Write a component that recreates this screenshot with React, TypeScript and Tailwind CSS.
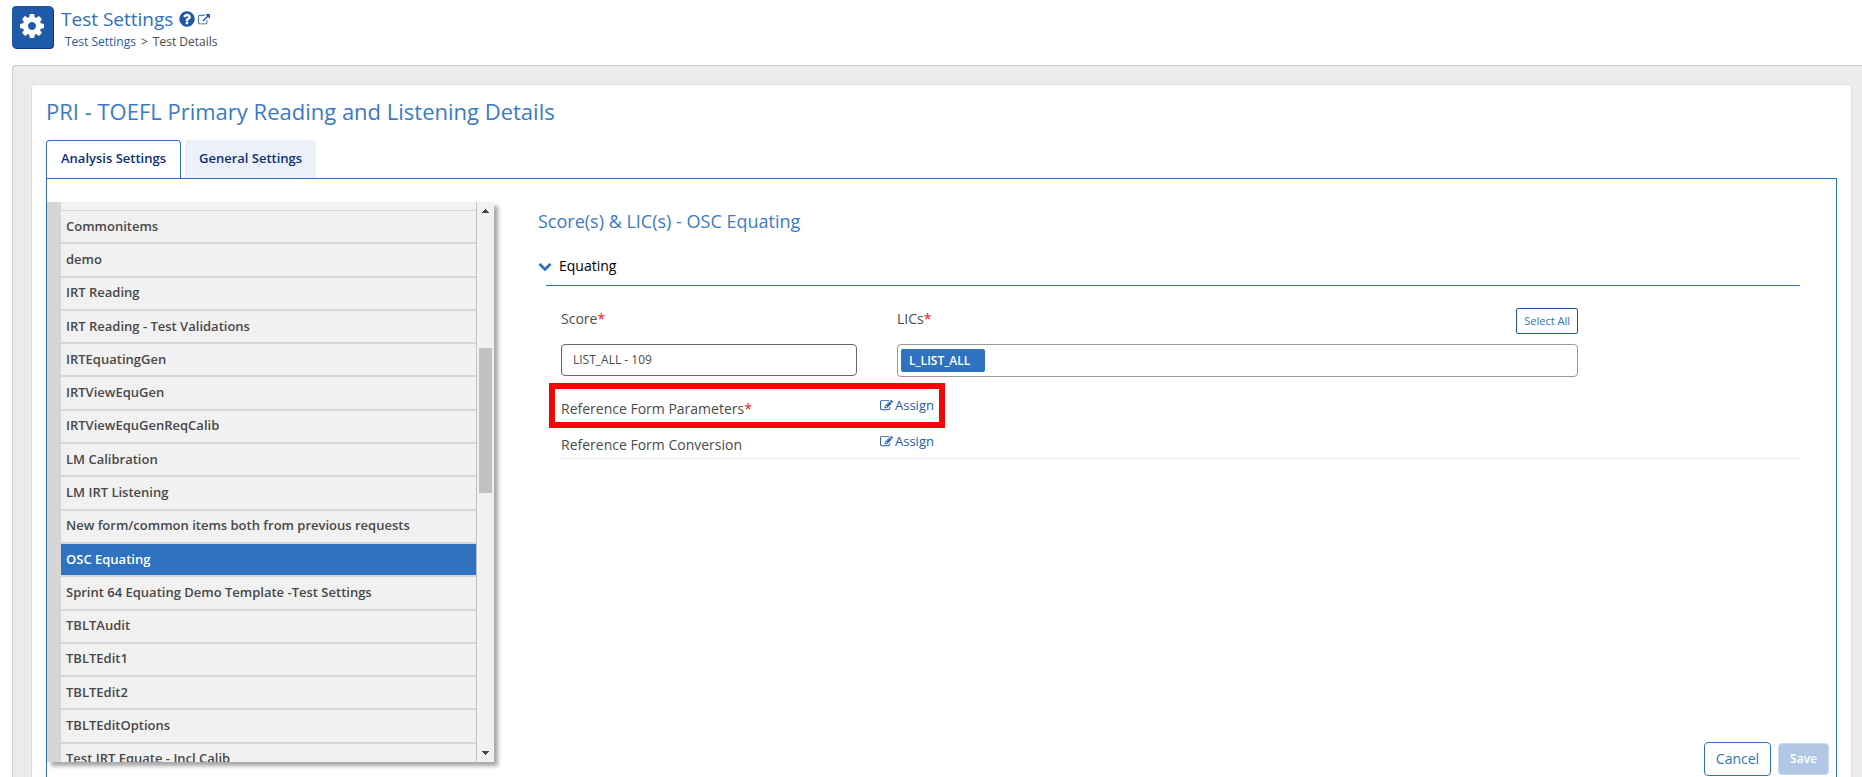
import React, { useState } from "react";

const ICONS = {
  cog: "M1152 896q0-106-75-181t-181-75-181 75-75 181 75 181 181 75 181-75 75-181zm512-109v222q0 12-8 23t-20 13l-185 28q-19 54-39 91 35 50 107 138 10 12 10 25t-9 23q-27 37-99 108t-94 71q-12 0-26-9l-138-108q-44 23-91 38-16 136-29 186-7 28-36 28h-222q-14 0-24.5-8.5t-11.5-21.5l-28-184q-49-16-90-37l-141 107q-10 9-25 9-14 0-25-11-126-114-165-168-7-10-7-23 0-12 8-23 15-21 51-66.5t54-70.5q-27-50-41-99l-183-27q-13-2-21-12.5t-8-23.5v-222q0-12 8-23t19-13l186-28q14-46 39-92-40-57-107-138-10-12-10-24 0-10 9-23 26-36 98.5-107.5t94.500-71.500q13 0 26 10l138 107q44-23 91-38 16-136 29-186 7-28 36-28h222q14 0 24.5 8.5t11.5 21.500l28 184q49 16 90 37l142-107q9-9 24-9 13 0 25 10 129 119 165 170 7 8 7 22 0 12-8 23-15 21-51 66.5t-54 70.5q26 50 41 98l183 28q13 2 21 12.5t8 23.5z",
  question:
    "M1024 1376v-192q0-14-9-23t-23-9h-192q-14 0-23 9t-9 23v192q0 14 9 23t23 9h192q14 0 23-9t9-23zm256-672q0-88-55.5-163t-138.500-116-170-41q-243 0-371 213-15 24 8 42l132 100q7 6 19 6 16 0 25-12 53-68 86-92 34-24 86-24 48 0 85.500 26t37.500 59q0 38-20 61t-68 45q-63 28-115.500 86.500t-52.500 125.500v36q0 14 9 23t23 9h192q14 0 23-9t9-23q0-19 21.500-49.500t54.500-49.500q32-18 49-28.500t46-35 44.500-48 28-60.500 12.500-81zm384 192q0 209-103 385.500t-279.500 279.500-385.500 103-385.500-103-279.500-279.500-103-385.500 103-385.500 279.500-279.500 385.500-103 385.500 103 279.500 279.500 103 385.500z",
  external:
    "M1408 928v320q0 119-84.500 203.500t-203.500 84.500h-832q-119 0-203.500-84.500t-84.500-203.500v-832q0-119 84.500-203.500t203.500-84.500h704q14 0 23 9t9 23v64q0 14-9 23t-23 9h-704q-66 0-113 47t-47 113v832q0 66 47 113t113 47h832q66 0 113-47t47-113v-320q0-14 9-23t23-9h64q14 0 23 9t9 23zm384-864v512q0 26-19 45t-45 19-45-19l-176-176-652 652q-10 10-23 10t-23-10l-114-114q-10-10-10-23t10-23l652-652-176-176q-19-19-19-45t19-45 45-19h512q26 0 45 19t19 45z",
  edit: "M888 1184l116-116-152-152-116 116v56h96v96h56zm440-720q-16-16-33 1l-350 350q-17 17-1 33t33-1l350-350q17-17 1-33zm80 594v190q0 119-84.500 203.500t-203.500 84.500h-832q-119 0-203.500-84.500t-84.500-203.500v-832q0-119 84.500-203.500t203.500-84.500h832q63 0 117 25 15 7 18 23 3 17-9 29l-49 49q-14 14-32 8-23-6-45-6h-832q-66 0-113 47t-47 113v832q0 66 47 113t113 47h832q66 0 113-47t47-113v-126q0-13 9-22l64-64q15-15 35-7t20 29zm-96-738l288 288-672 672h-288v-288zm444 132l-92 92-288-288 92-92q28-28 68-28t68 28l152 152q28 28 28 68t-28 68z",
  chevron:
    "M1683 808l-742 741q-19 19-45 19t-45-19l-742-741q-19-19-19-45.500t19-45.500l166-165q19-19 45-19t45 19l531 531 531-531q19-19 45-19t45 19l166 165q19 19 19 45.500t-19 45.500z",
};

interface IconProps {
  name: keyof typeof ICONS;
  className?: string;
}

const Icon: React.FC<IconProps> = ({ name, className }) => (
  <svg viewBox="0 0 1792 1792" fill="currentColor" className={className} aria-hidden="true">
    <path d={ICONS[name]} />
  </svg>
);

const templates = [
  "Commonitems",
  "demo",
  "IRT Reading",
  "IRT Reading - Test Validations",
  "IRTEquatingGen",
  "IRTViewEquGen",
  "IRTViewEquGenReqCalib",
  "LM Calibration",
  "LM IRT Listening",
  "New form/common items both from previous requests",
  "OSC Equating",
  "Sprint 64 Equating Demo Template -Test Settings",
  "TBLTAudit",
  "TBLTEdit1",
  "TBLTEdit2",
  "TBLTEditOptions",
  "Test IRT Equate - Incl Calib",
];

const PageHeader: React.FC = () => (
  <header className="flex gap-2 pt-1.5 pl-3 h-[65px] shrink-0">
    <div className="w-[41px] h-[42px] rounded bg-[#1f5aa9] shadow-[1px_1px_0_#0b3a85] flex items-center justify-center pr-0.5 pb-0.5 text-white">
      <Icon name="cog" className="size-7" />
    </div>
    <div>
      <div className="flex items-center h-7 pb-0.5 text-[#2f6fbd]">
        <h1 className="text-[19px] leading-[26px]">Test Settings</h1>
        <a href="#help" aria-label="Help" className="ml-[5px] text-[#1f5aa9]">
          <Icon name="question" className="size-[18px]" />
        </a>
        <a href="#open" aria-label="Open in new window" className="ml-0.5 mt-0.5 text-[#1f5aa9]">
          <Icon name="external" className="size-3" />
        </a>
      </div>
      <nav aria-label="Breadcrumb" className="flex gap-[5px] pl-1 text-xs leading-4">
        <a href="#settings" className="text-[#1f5aa9]">Test Settings</a>
        <span>&gt;</span>
        <span>Test Details</span>
      </nav>
    </div>
  </header>
);

const Tabs: React.FC = () => (
  <div role="tablist" className="flex gap-1 text-[13px] font-semibold text-[#0b2f7c]">
    <button
      type="button"
      role="tab"
      aria-selected="true"
      className="h-[38px] px-3.5 pb-px rounded-t border border-b-0 border-[#2f72c0] bg-white"
    >
      Analysis Settings
    </button>
    <button type="button" role="tab" aria-selected="false" className="h-[38px] px-3.5 rounded-t bg-[#ecf1f9]">
      General Settings
    </button>
  </div>
);

const TemplateList: React.FC = () => {
  const [selected, setSelected] = useState("OSC Equating");

  return (
    <aside className="flex w-[447px] h-[560px] shrink-0 mt-[23px] bg-[#f1f1f1] shadow-[4px_4px_4px_rgba(0,0,0,0.35)]">
      <div className="w-3.5 bg-[#d6d6d6]" />
      <div className="flex-1 overflow-hidden border-r border-[#c3c3c3]">
        <div className="h-2" />
        <ul className="grid auto-rows-fr h-[566px]">
          {templates.map((name) => (
            <li key={name} className="flex border-y border-[#d6d6d6]">
              <button
                type="button"
                onClick={() => setSelected(name)}
                className={
                  name === selected
                    ? "w-full px-[5px] pb-0.5 text-left text-[13px] leading-5 font-semibold bg-[#2f72c0] text-white"
                    : "w-full px-[5px] pb-0.5 text-left text-[13px] leading-5 font-semibold text-[#48484a]"
                }
              >
                {name}
              </button>
            </li>
          ))}
        </ul>
      </div>
      <div className="flex flex-col items-center w-[17px] py-[7px]">
        <svg viewBox="0 0 7 4" className="w-[7px] h-1 fill-[#444]">
          <path d="M3 0h1v1h1v1h1v1h1v1H0V3h1V2h1V1h1z" />
        </svg>
        <div className="w-[13px] h-[145px] mt-[135px] bg-[#c1c1c1]" />
        <svg viewBox="0 0 7 4" className="w-[7px] h-1 mt-auto fill-[#444]">
          <path d="M0 0h7v1H6v1H5v1H4v1H3V3H2V2H1V1H0z" />
        </svg>
      </div>
    </aside>
  );
};

interface AssignRowProps {
  label: string;
  required?: boolean;
}

const AssignRow: React.FC<AssignRowProps> = ({ label, required = false }) => (
  <div className="flex items-start">
    <span className="w-[319px] pt-1 text-sm leading-5">
      {label}
      {required && <span className="text-[#fb1010]">*</span>}
    </span>
    <a href="#assign" className="flex items-center gap-0.5 text-[13px] leading-5 text-[#1f5aa9]">
      <Icon name="edit" className="size-[13px]" />
      Assign
    </a>
  </div>
);

const EquatingForm: React.FC = () => (
  <section className="flex flex-col flex-1 min-w-0 pl-11">
    <h3 className="mt-7 text-lg leading-7 text-[#3a7ac6]">Score(s) &amp; LIC(s) - OSC Equating</h3>

    <div className="mr-9">
      <button type="button" className="flex items-center gap-[7px] mt-[21px] h-5 text-sm text-black">
        <Icon name="chevron" className="size-3.5 text-[#2f72c0]" />
        Equating
      </button>
      <div className="ml-2 mt-[9px] border-t border-[#2f72c0]" />

      <div className="ml-[23px] border-b border-[#e8e8e8] pb-[3px]">
        <div className="grid grid-cols-[296fr_681fr_182fr] gap-x-10 pt-[22px]">
          <div>
            <label htmlFor="score" className="flex h-9 pt-px text-sm leading-5">
              Score<span className="text-[#fb1010]">*</span>
            </label>
            <input
              id="score"
              defaultValue="LIST_ALL - 109"
              className="w-full h-8 px-[11px] pb-0.5 text-xs border border-[#66666c] rounded"
            />
          </div>
          <div>
            <div className="flex justify-between h-9">
              <span id="lics" className="pt-px text-sm leading-5">
                LICs<span className="text-[#fb1010]">*</span>
              </span>
              <button type="button" className="h-[26px] px-[7px] text-[11px] text-[#2f72c0] border border-[#1f5aa9] rounded-xs">
                Select All
              </button>
            </div>
            <div role="group" aria-labelledby="lics" className="flex items-center h-[33px] px-[3px] border border-[#999] rounded">
              <span className="flex items-center h-[23px] pl-2 pr-[15px] rounded-xs bg-[#2f72c0] text-white text-xs font-semibold">
                L_LIST_ALL
              </span>
            </div>
          </div>
        </div>

        <div className="w-[396px] h-[45px] -ml-3 mt-1.5 pl-1.5 pt-1.5 border-6 border-[#f60505]">
          <AssignRow label="Reference Form Parameters" required />
        </div>
        <div className="mt-[3px]">
          <AssignRow label="Reference Form Conversion" />
        </div>
      </div>
    </div>

    <div className="flex justify-end items-center gap-[7px] mt-auto mr-[7px] pb-px">
      <button type="button" className="h-[34px] px-[11px] text-sm text-[#2f72c0] border border-[#2f72c0] rounded">
        Cancel
      </button>
      <button type="button" disabled className="h-8 px-[11px] text-xs font-semibold text-white bg-[#b0c8e6] border border-[#c9daee] rounded">
        Save
      </button>
    </div>
  </section>
);

const App: React.FC = () => (
  <div className="flex flex-col h-screen overflow-hidden bg-white text-[#4b4b4d] font-['Open_Sans','Noto_Sans',sans-serif]">
    <PageHeader />
    <main className="flex flex-col flex-1 ml-3 pl-[18px] pt-[18px] pr-2.5 bg-[#ececec] border-t border-l border-[#ccc] rounded-tl">
      <div className="flex flex-col flex-1 px-3.5 pt-3 bg-white border border-b-0 border-[#ddd] rounded-t">
        <h2 className="h-[43px] text-[22px] leading-7 text-[#3a7ac6]">
          PRI - TOEFL Primary Reading and Listening Details
        </h2>
        <Tabs />
        <div className="flex flex-1 border border-b-0 border-[#2f72c0]">
          <TemplateList />
          <EquatingForm />
        </div>
      </div>
    </main>
  </div>
);

export default App;
